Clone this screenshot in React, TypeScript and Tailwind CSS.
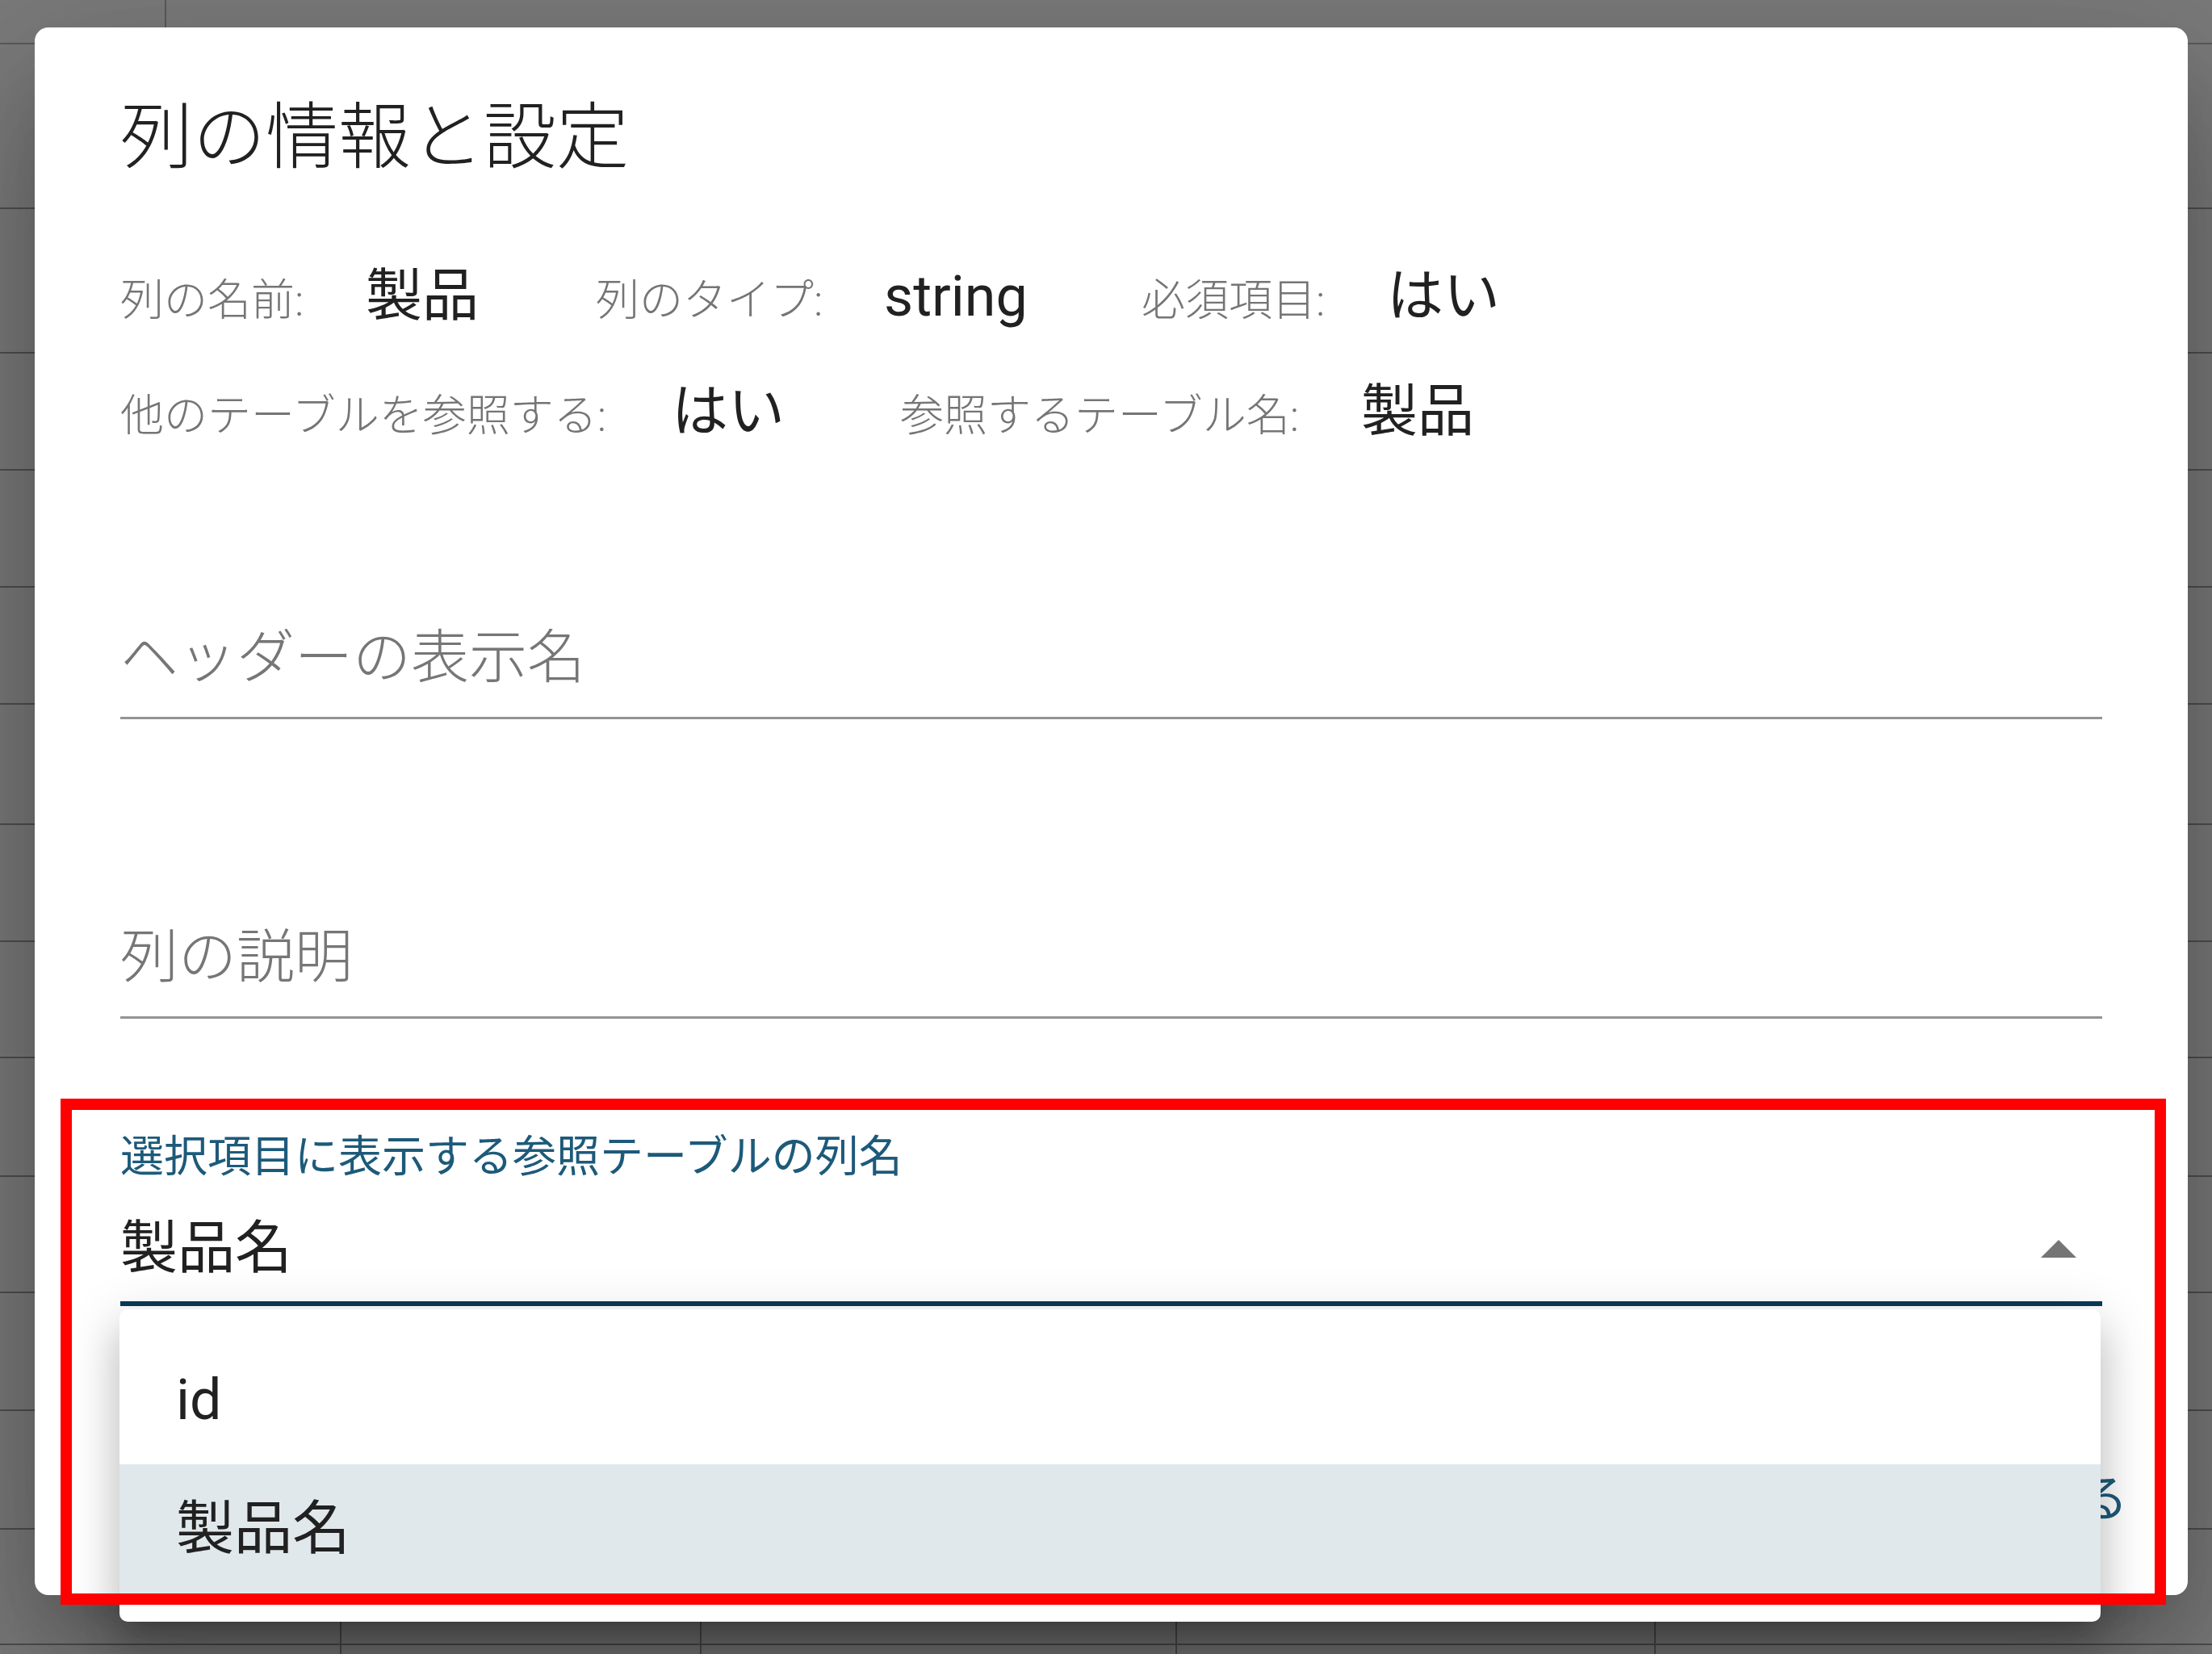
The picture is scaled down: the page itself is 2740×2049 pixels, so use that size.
const font = "font-['Roboto','Noto_Sans_CJK_JP',sans-serif]";

// spreadsheet rows behind the dialog backdrop
const sheetRows = [
  'h-[204px]',
  'h-[179px]',
  'h-[145px]',
  'h-[145px]',
  'h-[145px]',
  'h-[149px]',
  'h-[145px]',
  'h-[144px]',
  'h-[147px]',
  'h-[144px]',
  'h-[146px]',
  'h-[147px]',
];

function BottomCells() {
  return (
    <>
      <div className="w-[423px] border-r-2 border-[#4e4e4e]" />
      <div className="w-[446px] border-r-2 border-[#4e4e4e]" />
      <div className="w-[589px] border-r-2 border-[#4e4e4e]" />
      <div className="w-[593px] border-r-2 border-[#4e4e4e]" />
      <div className="flex-1" />
    </>
  );
}

function SheetBackdrop() {
  return (
    <div className="flex flex-col">
      <div className="flex h-[55px] border-b-2 border-[#5a5a5a]">
        <div className="w-[206px] border-r-2 border-[#5a5a5a]" />
      </div>
      {sheetRows.map((h, i) => (
        <div key={i} className={`${h} border-b-2 border-[#4e4e4e]`} />
      ))}
      <div className="flex h-[143px] border-b-2 border-[#4e4e4e]">
        <BottomCells />
      </div>
      <div className="flex h-[11px]">
        <BottomCells />
      </div>
    </div>
  );
}

function InfoLabel({ text, w }: { text: string; w: string }) {
  return <span className={`${w} shrink-0 text-[54px] leading-[100px] font-light text-[#757575]`}>{text}</span>;
}

function InfoValue({ text, w }: { text: string; w?: string }) {
  return <span className={`${w ?? ''} shrink-0 text-[70px] leading-[100px] text-[#212121]`}>{text}</span>;
}

function TextField({ placeholder, className }: { placeholder: string; className: string }) {
  return (
    <div className={`${className} border-b-[3px] border-[#949494] pb-[23px]`}>
      <div className="h-[100px] text-[72px] leading-[100px] font-light text-[#767676]">{placeholder}</div>
    </div>
  );
}

export default function App() {
  return (
    <div className={`relative w-[2740px] h-[2049px] overflow-hidden bg-[#7a7a7a] ${font}`}>
      <SheetBackdrop />

      {/* dialog */}
      <div className="absolute left-[43px] top-[34px] w-[2667px] h-[1942px] rounded-[17px] bg-white shadow-[0_48px_66px_-31px_rgba(0,0,0,0.2),0_106px_167px_13px_rgba(0,0,0,0.16),0_50px_202px_25px_rgba(0,0,0,0.12)]">
        <div className="flex flex-col px-[106px]">
          <h2 className="mt-[66px] h-[141px] text-[90px] leading-[141px] font-light text-[#212121]">列の情報と設定</h2>

          <div className="mt-[76px] flex h-[100px] items-baseline">
            <InfoLabel text="列の名前:" w="w-[304px]" />
            <InfoValue text="製品" w="w-[285px]" />
            <InfoLabel text="列のタイプ:" w="w-[357px]" />
            <InfoValue text="string" w="w-[319px]" />
            <InfoLabel text="必須項目:" w="w-[304px]" />
            <InfoValue text="はい" />
          </div>
          <div className="mt-[43px] flex h-[100px] items-baseline">
            <InfoLabel text="他のテーブルを参照する:" w="w-[683px]" />
            <InfoValue text="はい" w="w-[283px]" />
            <InfoLabel text="参照するテーブル名:" w="w-[571px]" />
            <InfoValue text="製品" />
          </div>

          <TextField placeholder="ヘッダーの表示名" className="mt-[205px]" />
          <TextField placeholder="列の説明" className="mt-[245px]" />

          <div className="mt-[137px] h-[70px] text-[54px] leading-[70px] text-[#1d5a7a]">
            選択項目に表示する参照テーブルの列名
          </div>
          <div className="mt-[27px] flex items-center justify-between border-b-[6px] border-[#0b3a57] pb-[16px]">
            <span className="h-[100px] text-[71px] leading-[100px] text-[#212121]">製品名</span>
            <svg className="mr-[32px] mt-[2px] w-[44px] h-[22px]" viewBox="7 10 10 5">
              <path d="M7 15l5-5 5 5z" fill="#757575" />
            </svg>
          </div>
        </div>

        <div className="mt-[190px] flex justify-end px-[74px]">
          <span className="h-[100px] text-[62px] leading-[100px] text-[#1d5a7a]">閉じる</span>
        </div>
      </div>

      {/* open select menu */}
      <div className="absolute left-[148px] top-[1622px] w-[2454px] rounded-[10px] bg-white pt-[32px] pb-[35px] shadow-[0_22px_22px_-22px_rgba(0,0,0,0.2),0_35px_44px_4px_rgba(0,0,0,0.14),0_13px_62px_9px_rgba(0,0,0,0.12)]">
        <div className="flex h-[160px] items-center px-[70px] text-[70px] text-[#212121]">id</div>
        <div className="flex h-[160px] items-center bg-[#e1e8ec] px-[70px] text-[72px] text-[#212121]">製品名</div>
      </div>

      {/* annotation */}
      <div className="pointer-events-none absolute left-[75px] top-[1361px] w-[2608px] h-[627px] border-[14px] border-[#ff0000]" />
    </div>
  );
}
